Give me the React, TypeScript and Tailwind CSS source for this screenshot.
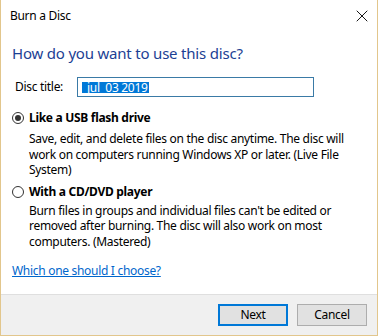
import { X } from "lucide-react"

const font = "font-['Noto_Sans',sans-serif]"

export default function App() {
  return (
    <div className={`w-[378px] h-[336px] bg-white border-x border-b border-[#e2c68c] flex flex-col text-[12px] tracking-[-0.3px] text-black ${font}`}>
      {/* Title bar */}
      <div className="h-[32px] flex items-center justify-between pl-[9px] pr-[5px]">
        <span className="text-[12px]">Burn a Disc</span>
        <X className="w-[20px] h-[20px] text-black" strokeWidth={1.1} />
      </div>

      {/* Body */}
      <div className="flex-1 flex flex-col px-[11px]">
        <h1 className="mt-[10px] text-[15px] tracking-[-0.2px] leading-[22px] text-[#1c3f94]">How do you want to use this disc?</h1>

        <div className="mt-[13px] flex items-center pl-[3px]">
          <span className="w-[62px]">Disc title:</span>
          <div className="w-[237px] h-[20px] border border-[#3a7aa6] flex items-center pl-[4px]">
            <span className="bg-[#0078d7] text-white leading-[11px] h-[11px] pl-[5px] pr-[1px] flex items-center">
              {"jul\u00a0\u00a003 2019"}
            </span>
          </div>
        </div>

        <label className="mt-[13px] flex items-center gap-[5px] leading-[16px]">
          <span className="w-[12px] h-[12px] rounded-full border border-[#333] flex items-center justify-center">
            <span className="w-[6px] h-[6px] rounded-full bg-[#333]" />
          </span>
          <span className="font-bold">Like a USB flash drive</span>
        </label>
        <p className="mt-[5px] ml-[17px] leading-[15.5px]">
          Save, edit, and delete files on the disc anytime. The disc will<br />
          work on computers running Windows XP or later. (Live File<br />
          System)
        </p>

        <label className="mt-[6px] flex items-center gap-[5px] leading-[16px]">
          <span className="w-[12px] h-[12px] rounded-full border border-[#333]" />
          <span className="font-bold">With a CD/DVD player</span>
        </label>
        <p className="mt-[3px] ml-[17px] leading-[15.5px]">
          Burn files in groups and individual files can't be edited or<br />
          removed after burning. The disc will also work on most<br />
          computers. (Mastered)
        </p>

        <a className="mt-[14px] self-start underline text-[#0066cc] leading-[16px]">Which one should I choose?</a>
      </div>

      {/* Footer */}
      <div className="h-[41px] bg-[#f0f0f0] border-t border-[#dfdfdf] flex items-center justify-end gap-[9px] pr-[10px]">
        <button className="w-[70px] h-[22px] bg-[#e1e1e1] border-2 border-[#0078d7]">Next</button>
        <button className="w-[70px] h-[22px] bg-[#e1e1e1] border border-[#adadad]">Cancel</button>
      </div>
    </div>
  )
}
